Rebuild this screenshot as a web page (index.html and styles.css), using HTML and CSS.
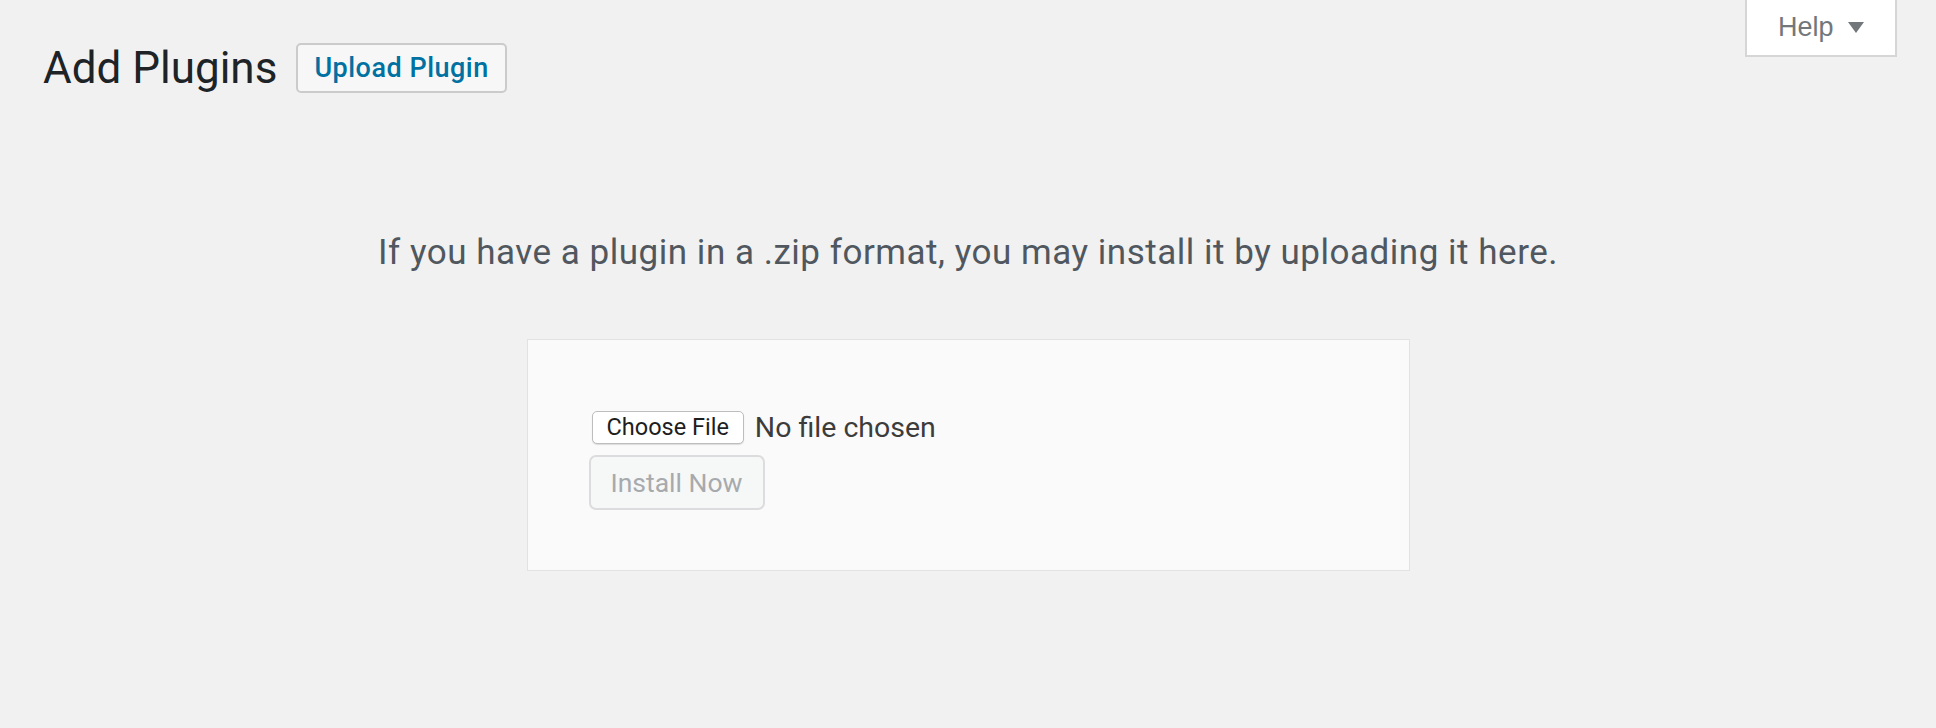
FILE: index.html
```html
<!DOCTYPE html>
<html lang="en">
<head>
<meta charset="utf-8">
<title>Add Plugins</title>
<link rel="stylesheet" href="styles.css">
</head>
<body>
<div class="top">
  <div class="heading">
    <h1 class="title">Add Plugins</h1>
    <a class="upload-btn" href="#">Upload Plugin</a>
  </div>
  <button class="help-tab" type="button">
    <span class="help-label">Help</span>
    <svg class="help-arrow" width="16" height="11" viewBox="0 0 16 11" aria-hidden="true"><polygon points="0,0 16,0 8,11" fill="#72777c"/></svg>
  </button>
</div>
<p class="install-help">If you have a plugin in a .zip format, you may install it by uploading it here.</p>
<form class="upload-form">
  <label class="file-row">
    <span class="file-btn">Choose File</span>
    <span class="file-name">No file chosen</span>
  </label>
  <div class="submit-row">
    <button class="install-btn" type="button" disabled>Install Now</button>
  </div>
</form>
</body>
</html>
```
FILE: styles.css
```css
html, body {
  margin: 0;
  padding: 0;
}
body {
  background: #f1f1f1;
  font-family: Roboto, "Noto Sans", Arial, sans-serif;
  color: #1d2327;
  height: 728px;
  overflow: hidden;
}
.top {
  display: flex;
  justify-content: space-between;
  align-items: flex-start;
  padding: 0 39px 0 43px;
}
.heading {
  display: flex;
  align-items: center;
  margin-top: 43px;
}
.title {
  margin: 0;
  font-size: 44px;
  font-weight: 400;
  line-height: 50px;
  color: #1d2327;
}
.upload-btn {
  margin-left: 19px;
  display: block;
  box-sizing: border-box;
  height: 50px;
  line-height: 46px;
  padding: 0 16px;
  border: 2px solid #cbcbcb;
  border-radius: 5px;
  background: #f7f7f7;
  color: #0071a1;
  font-size: 27px;
  font-weight: 500;
  letter-spacing: 0.5px;
  text-decoration: none;
}
.help-tab {
  display: flex;
  align-items: center;
  box-sizing: border-box;
  width: 152px;
  height: 57px;
  padding: 0 0 0 31px;
  margin: 0;
  background: #fff;
  border: 2px solid #d6d6d6;
  border-top: 0;
  border-radius: 0;
  font-family: "Liberation Sans", Arial, sans-serif;
  font-size: 27px;
  color: #72777c;
}
.help-arrow {
  margin-left: 14px;
  display: block;
}
.install-help {
  margin: 137px 0 0;
  text-align: center;
  font-size: 35px;
  letter-spacing: 0.52px;
  line-height: 46px;
  color: #50575e;
}
.upload-form {
  box-sizing: border-box;
  width: 883px;
  margin: 63px auto 0;
  padding: 60px 61px;
  background: #fafafa;
  border: 1px solid #e2e2e2;
  display: flex;
  flex-direction: column;
}
.file-row {
  display: flex;
  align-items: center;
  height: 54px;
}
.file-btn {
  box-sizing: border-box;
  height: 33px;
  margin-left: 3px;
  padding: 0 14px;
  display: flex;
  align-items: center;
  background: #fff;
  border: 1px solid #bdbdbd;
  border-radius: 5px;
  box-shadow: 0 1px 1px rgba(0,0,0,0.12);
  font-size: 23.5px;
  color: #1e1e1e;
}
.file-name {
  margin-left: 11px;
  font-size: 28.5px;
  color: #3c3c3c;
}
.submit-row {
  display: flex;
}
.install-btn {
  box-sizing: border-box;
  height: 55px;
  margin: 1px 0 0;
  padding: 0 20px;
  background: #f6f7f7;
  border: 2px solid #dcdcde;
  border-radius: 7px;
  font-family: Roboto, "Noto Sans", Arial, sans-serif;
  font-size: 26.5px;
  color: #a7aaad;
}
```
